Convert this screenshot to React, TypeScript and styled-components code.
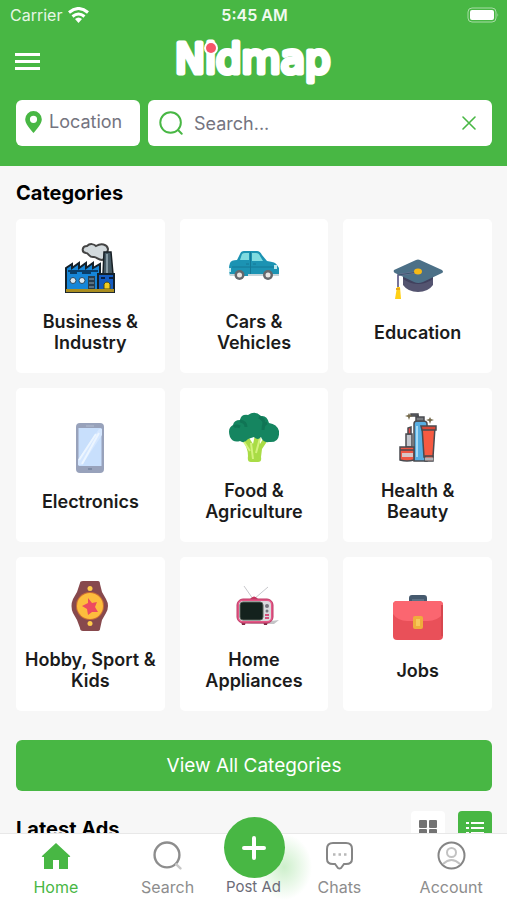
import React from "react";
import styled, { createGlobalStyle } from "styled-components";

const green = "#48b744";

const GlobalStyle = createGlobalStyle`
  * { box-sizing: border-box; }
  body { margin: 0; background: #f7f7f7; font-family: Inter, "Liberation Sans", sans-serif; }
  button, input { font-family: inherit; }
  button { border: 0; padding: 0; cursor: pointer; }
  h1, h2 { margin: 0; }
`;

const Screen = styled.div`
  display: flex;
  flex-direction: column;
  height: 100vh;
  overflow: hidden;
`;

const Header = styled.header`
  flex: none;
  background: ${green};
  color: #fff;
  padding-bottom: 20px;
`;

const StatusBar = styled.div`
  display: grid;
  grid-template-columns: 1fr auto 1fr;
  align-items: center;
  height: 29px;
  padding: 0 8px 0 10px;
`;

const Carrier = styled.span`
  display: flex;
  align-items: center;
  gap: 6px;
  font-size: 16px;
  color: #e6f6e5;
`;

const Clock = styled.time`
  font-size: 16px;
  font-weight: 600;
  color: #f1faf0;
`;

const Battery = styled.svg`
  justify-self: end;
`;

const TitleBar = styled.div`
  display: grid;
  grid-template-columns: 1fr auto 1fr;
  align-items: center;
  height: 64px;
  padding: 0 15px;
`;

const MenuButton = styled.button`
  display: flex;
  flex-direction: column;
  gap: 4px;
  width: 25px;
  background: none;
`;

const MenuBar = styled.span`
  height: 3px;
  background: #fff;
`;

const Logo = styled.h1`
  display: flex;
`;

const LogoText = styled.text`
  font-family: "DejaVu Sans", sans-serif;
  font-size: 40px;
  font-weight: 400;
  fill: #fff;
  stroke: #fff;
  stroke-width: 5px;
  stroke-linejoin: round;
`;

const SearchRow = styled.form`
  display: flex;
  gap: 8px;
  height: 46px;
  margin-top: 7px;
  padding: 0 15px 0 16px;
`;

const LocationButton = styled.button`
  display: flex;
  align-items: center;
  gap: 7px;
  width: 124px;
  padding: 0 9px 3px;
  border-radius: 6px;
  background: #fff;
  color: #74747f;
  font-size: 18px;
`;

const SearchBox = styled.label`
  display: flex;
  flex: 1;
  min-width: 0;
  align-items: center;
  gap: 11px;
  padding: 0 16px 0 11px;
  border-radius: 6px;
  background: #fff;
  color: ${green};
`;

const SearchInput = styled.input`
  flex: 1;
  min-width: 0;
  padding: 0;
  border: 0;
  outline: 0;
  background: none;
  color: #333;
  font-size: 18px;
  &::placeholder { color: #74747f; opacity: 1; }
`;

const ClearButton = styled.button`
  display: flex;
  background: none;
`;

const Content = styled.main`
  flex: 1;
  min-height: 0;
  overflow-y: auto;
  scrollbar-width: none;
  padding: 13px 15px 0 16px;
`;

const Heading = styled.h2`
  font-size: 20px;
  line-height: 28px;
  font-weight: 700;
  color: #000;
`;

const CategoryGrid = styled.div`
  display: grid;
  grid-template-columns: repeat(3, 1fr);
  grid-auto-rows: 154px;
  gap: 15px;
  margin-top: 12px;
`;

const CategoryCard = styled.button`
  display: flex;
  flex-direction: column;
  align-items: center;
  justify-content: center;
  gap: 18px;
  padding: 4px 4px 0;
  border-radius: 5px;
  background: #fff;
  color: #1b1b1b;
  font-size: 18px;
  line-height: 21px;
  font-weight: 600;
`;

const CategoryName = styled.span`
  max-width: 134px;
`;

const ViewAll = styled.button`
  display: block;
  width: 100%;
  height: 51px;
  margin-top: 29px;
  border-radius: 6px;
  background: ${green};
  color: #fff;
  font-size: 19px;
`;

const AdsHeader = styled.div`
  display: flex;
  align-items: flex-start;
  gap: 13px;
  margin-top: 20px;
`;

const AdsTitle = styled(Heading)`
  flex: 1;
  padding-top: 4px;
`;

const ViewToggle = styled.button<{ $active?: boolean }>`
  display: flex;
  align-items: center;
  justify-content: center;
  width: 34px;
  height: 34px;
  border-radius: 4px;
  background: ${(p) => (p.$active ? green : "#fff")};
`;

const TabBar = styled.nav`
  flex: none;
  display: grid;
  grid-template-columns: 1fr 1fr 60px 1fr 1fr;
  height: 67px;
  border-top: 1px solid #e8e8e8;
  background: #fff;
`;

const Tab = styled.button<{ $active?: boolean }>`
  display: flex;
  flex-direction: column;
  align-items: center;
  gap: 7px;
  padding-top: 7px;
  background: none;
  color: ${(p) => (p.$active ? green : "#8d8d8d")};
  font-size: 16px;
  line-height: 20px;
`;

const PostTab = styled(Tab)`
  position: relative;
  justify-content: flex-end;
  padding: 0 0 3px;
  color: #6c6c78;
  font-size: 15px;
`;

const Glow = styled.span`
  position: absolute;
  right: -28px;
  bottom: 0;
  width: 56px;
  height: 66px;
  background: radial-gradient(closest-side, #cdefcb, #ffffff00);
`;

const PostCircle = styled.span`
  position: absolute;
  top: -17px;
  left: calc(50% - 30px);
  display: flex;
  align-items: center;
  justify-content: center;
  width: 61px;
  height: 61px;
  border-radius: 50%;
  background: ${green};
`;

const PostLabel = styled.span`
  position: relative;
  white-space: nowrap;
`;

const Factory = () => (
  <svg width="50" height="50" viewBox="0 0 50 50" aria-hidden="true">
    <path d="M37 17c-4 0-5-3-8-3-5 1-5-4-8-4-5-1-4-7 1-7 3-3 7-2 9 0 5-3 11-2 12 3 0 2-2 4-1 9z" fill="#d3dadd" stroke="#444" strokeWidth="2" />
    <path d="M38 31l1-22h7l2 22z" fill="#465a65" stroke="#182026" strokeWidth="1.5" />
    <path d="M42 11v20" stroke="#879ba5" strokeWidth="2" />
    <path d="M1 49V25l6-4v4l7-5v5l7-5v5l7-5v5l7-4v28z" fill="#1686d8" stroke="#13212b" strokeWidth="2" />
    <path d="M3 28h30M5 30h7m5 0h9" stroke="#0a3e69" strokeWidth="2" />
    <path d="M33 31h16v18H33z" fill="#145bc1" stroke="#13212b" strokeWidth="2" />
    <path d="M23 33h7v13h-7z" fill="#283d4d" />
    <path d="M24 36h5m-5 4h5m-5 4h5" stroke="#8aa5b5" />
    <circle cx="8" cy="37.500" r="3" fill="#dbe7ef" stroke="#274963" />
    <circle cx="17" cy="37.500" r="3" fill="#dbe7ef" stroke="#274963" />
    <path d="M36 35h4m4 0h4" stroke="#081f43" strokeWidth="2" />
    <path d="M39 46v-5q3-4 6 0v5z" fill="#f1cc23" stroke="#4d4a13" />
    <path d="M1 47.500h48" stroke="#a98d1f" strokeWidth="3" />
    <path d="M1 49.500h48" stroke="#222b30" />
  </svg>
);

const Car = () => (
  <svg width="50" height="50" viewBox="0 0 50 50" aria-hidden="true">
    <path d="M1 20q1-3 7-3l3-6q1-3 4-3h13q3 0 5 4l5 6q9 1 10 4l2 3v8H1q-2-8 0-13z" fill="#1c93b3" />
    <path d="M11 17l2-6q1-1 3-1h4v7h-9zm12-7h4q3 0 4 3l3 5H23z" fill="#7fdbe0" />
    <path d="M3 24h42M21.500 9v22M24 21h3m-10 0h3" fill="none" stroke="#147896" />
    <path d="M1 32h9m9 0h16m8 0h7" stroke="#c5d5da" strokeWidth="2" />
    <path d="M45 22h3v4h-3zM0 25h2v4H0z" fill="#bfe9ef" />
    <circle cx="10.500" cy="32" r="5" fill="#66686c" /><circle cx="10.500" cy="32" r="2.500" fill="#e8e5e3" />
    <circle cx="39" cy="32" r="5" fill="#66686c" /><circle cx="39" cy="32" r="2.500" fill="#e8e5e3" />
  </svg>
);

const Cap = () => (
  <svg width="50" height="50" viewBox="0 1 50 50" aria-hidden="true">
    <path d="M10 20h30v12q-5 7-15 7t-15-7z" fill="#545470" />
    <path d="M10 20h30v6q-7 5-15 5t-15-5z" fill="#41415e" />
    <path d="M1 17L23 7q2-1 4 0l22 10q2 2 0 3L30 29q-5 2-9 0L2 20q-2-1-1-3z" fill="#4c7087" />
    <path d="M25 19L5 22v13" fill="none" stroke="#77739a" strokeWidth="2" />
    <path d="M25 19L5 22" stroke="#37576d" />
    <ellipse cx="25" cy="18.500" rx="4" ry="3" fill="#f6b915" />
    <path d="M4 34h3l1 12H2z" fill="#ffd016" />
    <path d="M3 36h4" stroke="#e9a719" strokeWidth="2" />
  </svg>
);

const Phone = () => (
  <svg width="50" height="50" viewBox="0 0 50 50" aria-hidden="true">
    <rect x="11" y="0" width="28" height="50" rx="4" fill="#98a2bb" />
    <path d="M13.500 5h23v38h-23z" fill="#c8dffc" />
    <path d="M34 6h3v6L17 42h-4v-5z" fill="#d5e7ff" />
    <path d="M31 11L14 37m20-27L17 41" stroke="#ecf5ff" strokeWidth="2" />
    <path d="M21 3h8" stroke="#b2bdd0" /><path d="M23 46h4" stroke="#7d8ba5" strokeWidth="2" />
  </svg>
);

const Broccoli = () => (
  <svg width="50" height="50" viewBox="0 0 50 50" aria-hidden="true">
    <path d="M12 26l7-2 5 8 2-9h4l1 9 6-10 4 3-8 12-1 8q1 5-3 5h-7q-4 0-3-6 0-9-7-18z" fill="#a9dc46" />
    <path d="M22 31l2 16m7-21l-4 15m-14-14 8 12" stroke="#d4f27d" strokeWidth="2" />
    <path d="M11 8q1-6 8-5 7-5 13 1 6-1 8 7 8 1 10 8 1 12-10 11-6 1-8-5-3 4-7 0l-6 2q-4 5-8 2-7 2-10-4-3-9 3-12 1-5 7-5z" fill="#158560" />
    <path d="M11 9q6 1 6 6m13-10q7 3 4 10m4-4q-4 1-4 7M5 15q2-2 6 0" fill="none" stroke="#107555" strokeWidth="3" />
  </svg>
);

const Beauty = () => (
  <svg width="50" height="50" viewBox="0 0 50 50" aria-hidden="true">
    <g stroke="#494b50" strokeWidth="1.500">
      <path d="M21 12q0-3 3-3h6q4 0 4 3v37H21z" fill="#58afe3" />
      <path d="M23 9V5h8v4zm2-4V2h-7v2h8" fill="#777a7e" />
      <path d="M29 15h13l-2 30H31z" fill="#f65a42" />
      <path d="M28 14h15v4H29zm4 30h8v5h-8z" fill="#d94837" />
      <path d="M13 22h6v13h-6z" fill="#c4c8cf" />
      <path d="M15 22v-6l3-1v7z" fill="#e54b48" />
      <path d="M7 38h14v10q-7 2-14 0zM7 35h14v3H7z" fill="#ef5744" />
    </g>
    <path d="M24 14v31" stroke="#a6dcf7" strokeWidth="2" /><path d="M9 41h11v4H9z" fill="#d8c7c7" /><path d="M32 47h8" stroke="#b4b4b7" strokeWidth="3" />
    <path d="M16 1l1 2 3 1-3 1-1 3-1-3-3-1 3-1zm21 4l1 2 3 1-3 1-1 3-1-3-3-1 3-1z" fill="#756a4b" />
  </svg>
);

const Watch = () => (
  <svg width="50" height="50" viewBox="0 0 50 50" aria-hidden="true">
    <path d="M15 2q0-2 3-2h15q2 0 2 3l2 8 4 7q4 7 0 14l-4 7-2 9q0 2-3 2H18q-3 0-3-3l-3-8-4-7q-3-7 0-14l4-7z" fill="#87494d" />
    <circle cx="25" cy="25" r="14" fill="#cb6d35" /><circle cx="25" cy="25" r="13" fill="#fdbd3d" />
    <path d="M23 17l4 5 5-1-2 5 3 5-6 0-4 3-1-6-5-3 6-3z" fill="#ed4b60" />
    <circle cx="25" cy="7.500" r="2.500" fill="#ffcb4c" /><circle cx="25" cy="42.500" r="2.500" fill="#ffcb4c" />
  </svg>
);

const Television = () => (
  <svg width="50" height="50" viewBox="0 -1 50 50" aria-hidden="true">
    <path d="M24 17L15 4m10 13L39 5" stroke="#c8c8cc" />
    <path d="M21 17q4-5 8 0" fill="#c6365e" />
    <path d="M42 39l8-1-5 4H14z" fill="#c4c4c7" />
    <path d="M12 39h5l-1 4h-3zm22 0h5l-1 4h-3z" fill="#7d2842" />
    <rect x="8" y="17" width="36" height="24" rx="6" fill="#e65887" stroke="#bd3a66" />
    <rect x="10" y="19" width="32" height="20" rx="4" fill="#dadadd" />
    <rect x="11" y="20" width="23" height="18" rx="3" fill="#14221d" stroke="#576059" />
    <circle cx="38" cy="24" r="2" fill="#77737d" /><circle cx="38" cy="29" r="1.500" fill="#77737d" />
    <path d="M36 33h4m-4 3h4" stroke="#d34f7a" strokeWidth="2" />
  </svg>
);

const Briefcase = () => (
  <svg width="50" height="50" viewBox="0 -2 50 50" aria-hidden="true">
    <path d="M16 7V4q0-3 3-3h12q3 0 3 3v3h-4V5H20v2z" fill="#465a6e" />
    <path d="M19 5h12v3H19z" fill="#5d7184" />
    <rect x="0" y="7" width="50" height="39" rx="4" fill="#e95059" />
    <path d="M0 11q0-4 4-4h42q4 0 4 4v9q-6 7-15 7H14Q5 27 0 20z" fill="#fb6670" />
    <path d="M49 11v31" stroke="#d7474f" strokeWidth="2" />
    <rect x="20" y="22" width="10" height="13" rx="2" fill="#efad3c" /><path d="M23 25h4v7h-4z" fill="#f7c85a" />
  </svg>
);

const SearchIcon = ({ size, handle }: { size: number; handle: string }) => (
  <svg width={size} height={size} viewBox="0 0 28 28" fill="none" stroke="currentColor" strokeWidth="2.300" strokeLinecap="round" aria-hidden="true">
    <circle cx="13.500" cy="13.500" r="12" /><path d="M22.500 22.500L26.500 26.500" stroke={handle} />
  </svg>
);

const categories = [
  { name: "Business & Industry", icon: <Factory /> },
  { name: "Cars & Vehicles", icon: <Car /> },
  { name: "Education", icon: <Cap /> },
  { name: "Electronics", icon: <Phone /> },
  { name: "Food & Agriculture", icon: <Broccoli /> },
  { name: "Health & Beauty", icon: <Beauty /> },
  { name: "Hobby, Sport & Kids", icon: <Watch /> },
  { name: "Home Appliances", icon: <Television /> },
  { name: "Jobs", icon: <Briefcase /> },
];

export default function App() {
  return (
    <Screen>
      <GlobalStyle />
      <Header>
        <StatusBar>
          <Carrier>
            Carrier
            <svg width="21" height="16" viewBox="0 0 21 16" fill="none" stroke="#fff" strokeWidth="3" aria-hidden="true">
              <path d="M1 5.500Q10.500-2.500 20 5.500M4.500 9.500q6-5 12 0" />
              <path d="M7 12q3.500-3 7 0l-3.500 4z" fill="#fff" stroke="none" />
            </svg>
          </Carrier>
          <Clock>5:45 AM</Clock>
          <Battery width="32" height="16" viewBox="0 0 32 16" role="img" aria-label="Battery full">
            <rect x="1" y="1" width="28" height="14" rx="4" fill="none" stroke="#a7dca5" />
            <rect x="3" y="3" width="24" height="10" rx="2" fill="#fff" />
            <path d="M30.500 6q1.500 2 0 4z" fill="#a7dca5" />
          </Battery>
        </StatusBar>
        <TitleBar>
          <MenuButton type="button" aria-label="Menu"><MenuBar /><MenuBar /><MenuBar /></MenuButton>
          <Logo>
            <svg width="158" height="50" viewBox="0 0 158 50">
              <LogoText x="0" y="37">Nidmap</LogoText>
              <circle cx="36" cy="12" r="7" fill="#fff" />
              <circle cx="36" cy="12" r="5" fill="#f75468" />
            </svg>
          </Logo>
        </TitleBar>
        <SearchRow onSubmit={(e) => e.preventDefault()}>
          <LocationButton type="button">
            <svg width="17" height="22" viewBox="0 0 17 22" aria-hidden="true">
              <path d="M8.500 0a8.300 8.300 0 0 1 8.300 8.300C16.800 13 12 18 8.500 22 5 18 .2 13 .2 8.300A8.300 8.300 0 0 1 8.500 0zm0 4.700a3.600 3.600 0 1 0 0 7.200 3.600 3.600 0 0 0 0-7.200z" fill={green} />
            </svg>
            Location
          </LocationButton>
          <SearchBox>
            <SearchIcon size={24} handle="currentColor" />
            <SearchInput type="text" placeholder="Search..." aria-label="Search" />
            <ClearButton type="button" aria-label="Clear">
              <svg width="14" height="14" viewBox="0 0 14 14" stroke={green} strokeWidth="1.600" strokeLinecap="round"><path d="M1 1l12 12M13 1L1 13" /></svg>
            </ClearButton>
          </SearchBox>
        </SearchRow>
      </Header>
      <Content>
        <Heading>Categories</Heading>
        <CategoryGrid>
          {categories.map((c) => (
            <CategoryCard key={c.name} type="button">
              {c.icon}
              <CategoryName>{c.name}</CategoryName>
            </CategoryCard>
          ))}
        </CategoryGrid>
        <ViewAll type="button">View All Categories</ViewAll>
        <AdsHeader>
          <AdsTitle>Latest Ads</AdsTitle>
          <ViewToggle type="button" aria-label="Grid view">
            <svg width="18" height="17" viewBox="0 0 18 17" fill="#737373"><rect width="8" height="8" rx="1" /><rect x="10" width="8" height="8" rx="1" /><rect y="9" width="8" height="8" rx="1" /><rect x="10" y="9" width="8" height="8" rx="1" /></svg>
          </ViewToggle>
          <ViewToggle type="button" $active aria-label="List view">
            <svg width="18" height="12" viewBox="0 0 18 12" stroke="#fff" strokeWidth="2"><path d="M0 1h3m2 0h13M0 6h3m2 0h13M0 11h3m2 0h13" /></svg>
          </ViewToggle>
        </AdsHeader>
      </Content>
      <TabBar>
        <Tab type="button" $active>
          <svg width="30" height="29" viewBox="0 0 30 29" fill={green} aria-hidden="true"><path d="M15 2L29 15q1 1-1 1h-1v12h-9v-9h-6v9H3V16H2q-2 0-1-1z" /></svg>
          Home
        </Tab>
        <Tab type="button"><SearchIcon size={29} handle="#c8c8c8" />Search</Tab>
        <PostTab type="button">
          <Glow />
          <PostCircle>
            <svg width="26" height="26" viewBox="0 0 26 26" stroke="#fff" strokeWidth="4" strokeLinecap="round"><path d="M13 3v20M3 13h20" /></svg>
          </PostCircle>
          <PostLabel>Post Ad</PostLabel>
        </PostTab>
        <Tab type="button">
          <svg width="29" height="29" viewBox="0 0 29 29" fill="none" stroke="#858585" strokeWidth="2" aria-hidden="true"><path d="M8 2h13q6 0 6 6v10q0 5-6 5h-2l-3 4q-1.500 1-3 0l-3-4H8q-6 0-6-5V8q0-6 6-6z" /><path d="M8 13.500h2.500m3 0h2.500m3 0h2.500" stroke="#b8b8b8" strokeWidth="2.500" /></svg>
          Chats
        </Tab>
        <Tab type="button">
          <svg width="29" height="29" viewBox="0 0 29 29" fill="none" stroke="#858585" strokeWidth="2" aria-hidden="true"><circle cx="14.500" cy="14.500" r="13" /><circle cx="14.500" cy="11.500" r="4.500" stroke="#c2c2c2" /><path d="M6 23q8.500-8 17 0" stroke="#c2c2c2" /></svg>
          Account
        </Tab>
      </TabBar>
    </Screen>
  );
}
